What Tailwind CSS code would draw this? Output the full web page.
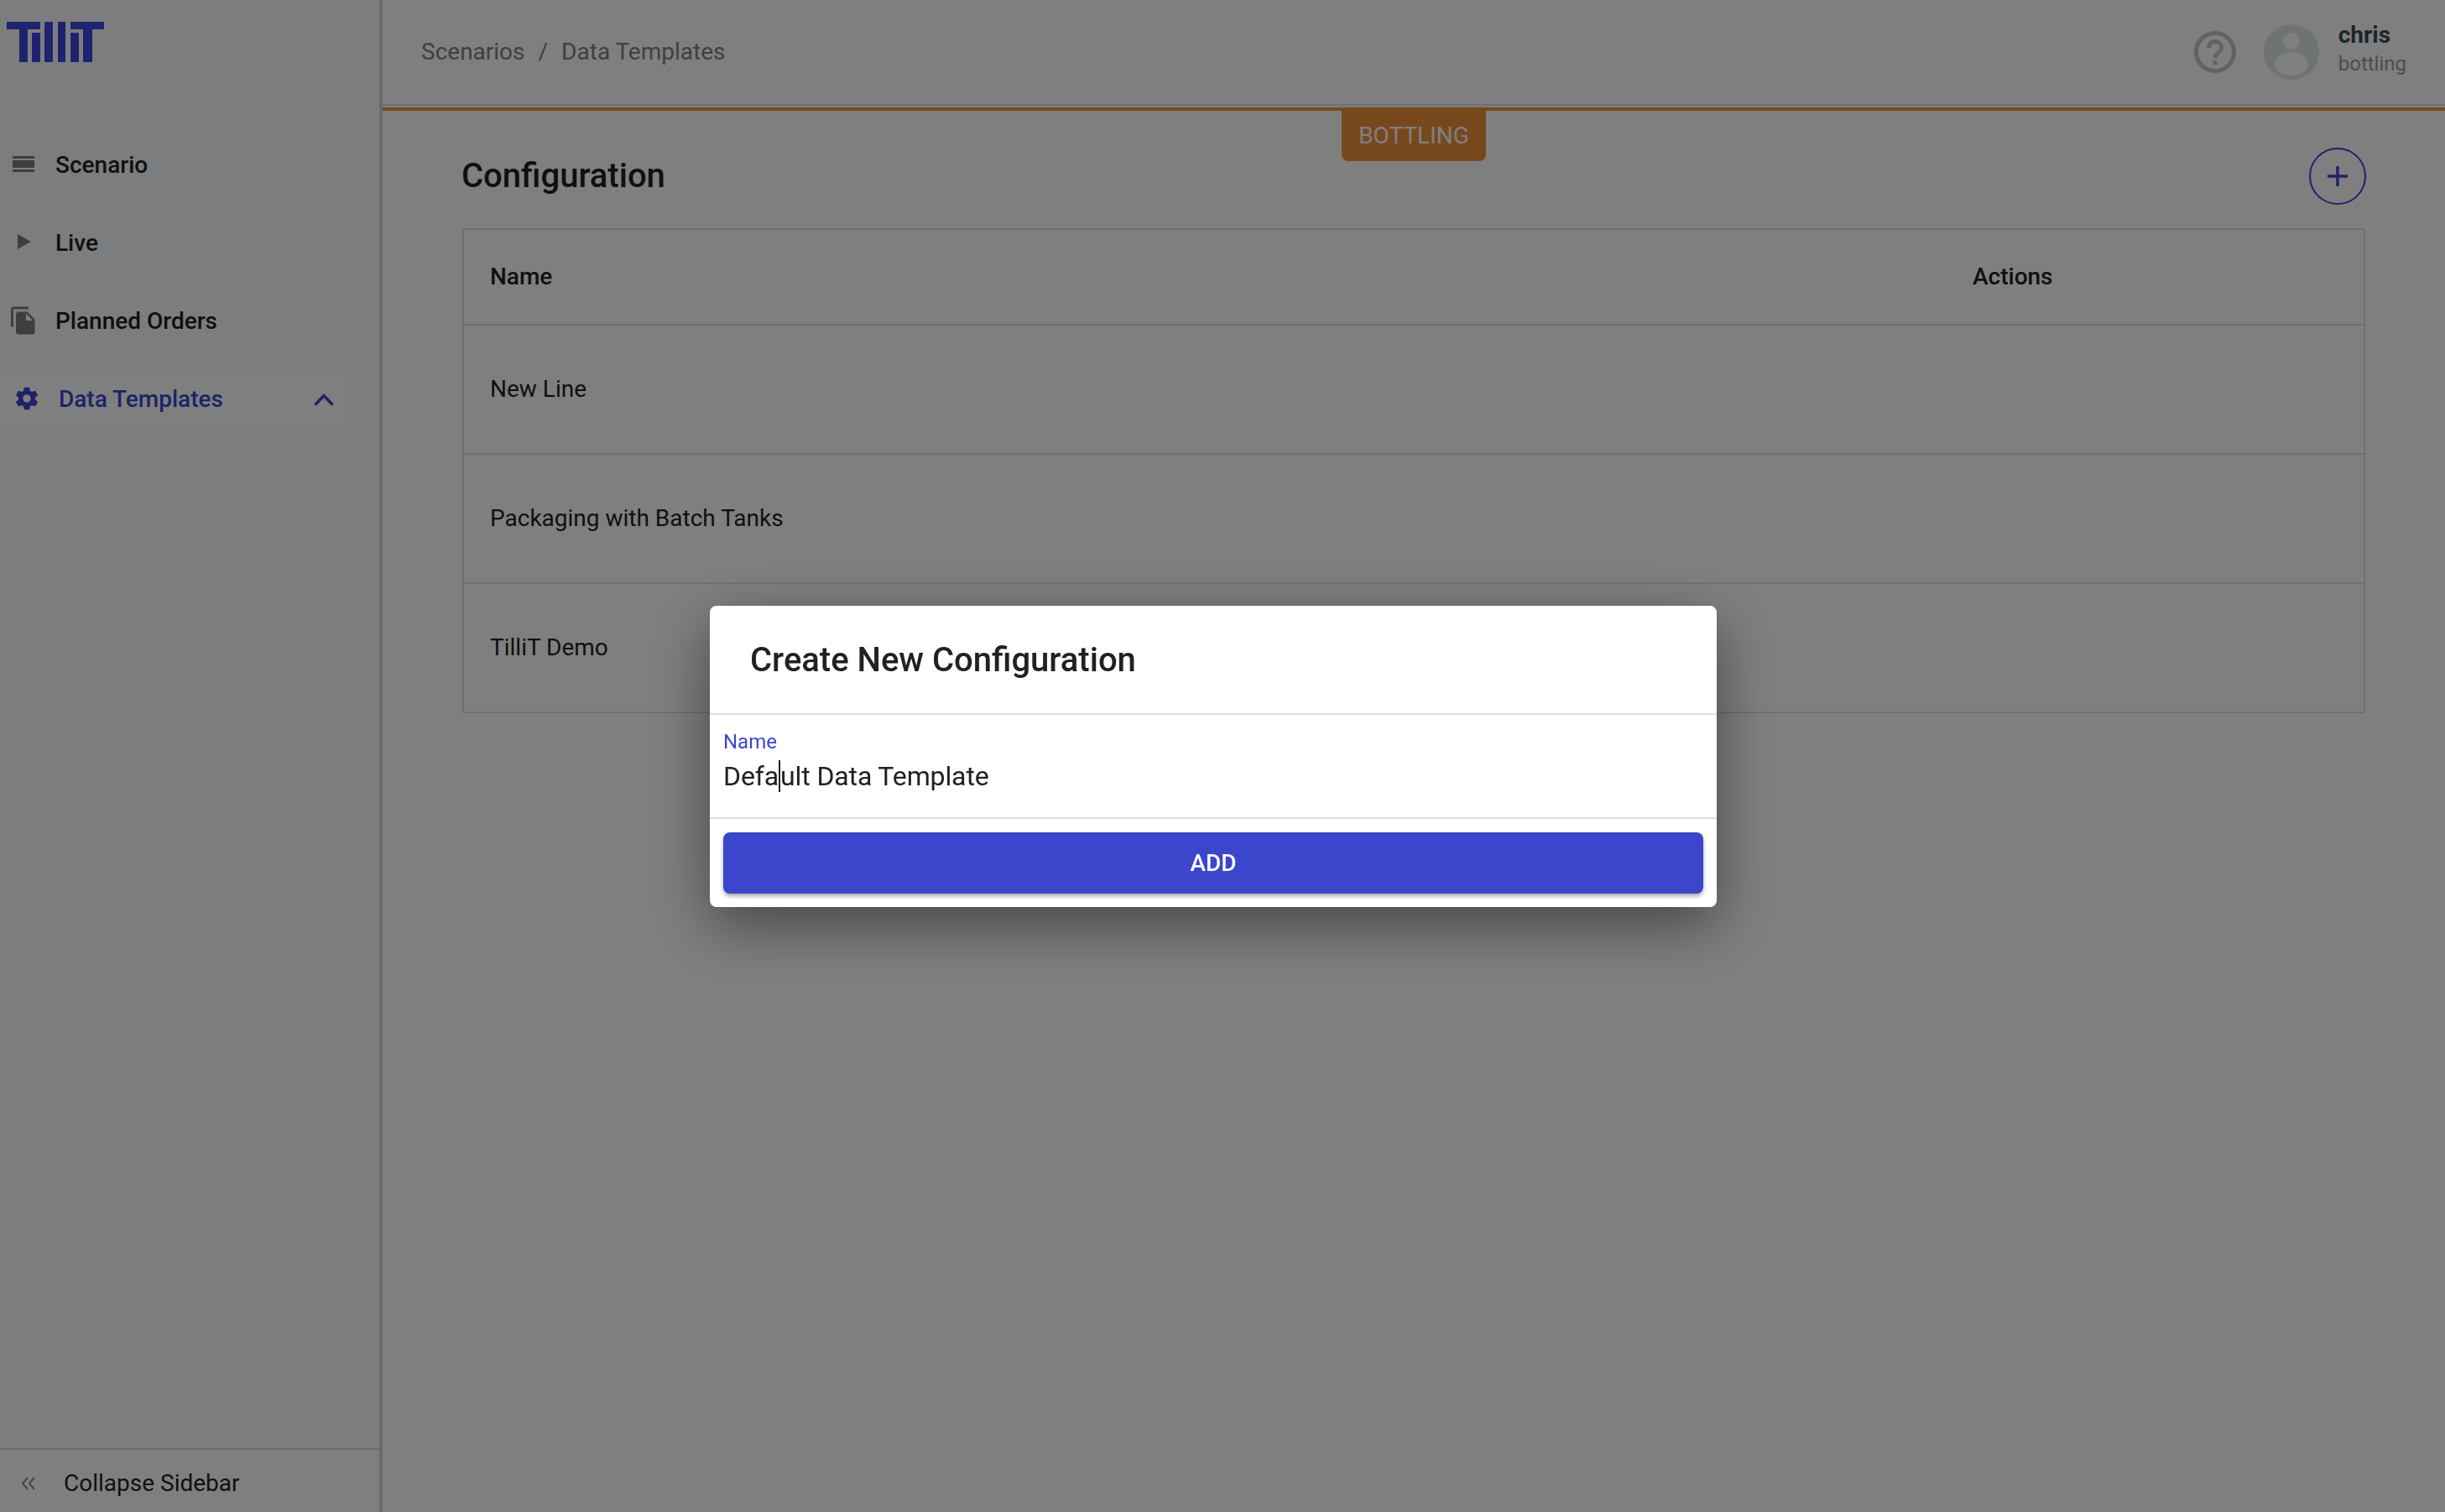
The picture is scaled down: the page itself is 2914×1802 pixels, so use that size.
<!DOCTYPE html>
<html lang="en">
<head>
    <meta charset="UTF-8">
    <title>Data Templates</title>
    <script src="https://cdn.jsdelivr.net/npm/@tailwindcss/browser@4"></script>
</head>
<body class="font-['Roboto',sans-serif]">
    <div class="flex h-[1802px] w-[2914px] overflow-hidden bg-white text-[#212121]">

        <!-- Sidebar -->
        <aside class="flex w-[456px] shrink-0 flex-col border-r-4 border-r-[#d6d7d9] bg-[#f8fafc]">
            <div class="h-[150px] pl-2 pt-[26px]">
                <svg class="block" width="116" height="48" viewBox="0 0 116 48" fill="#3c46e0">
                    <rect x="0" y="0" width="40" height="9"/>
                    <rect x="15" y="9" width="10" height="39"/>
                    <rect x="30" y="13" width="10" height="35"/>
                    <rect x="45" y="0" width="10" height="48"/>
                    <rect x="61" y="0" width="9" height="48"/>
                    <rect x="76" y="13" width="10" height="35"/>
                    <rect x="76" y="0" width="40" height="9"/>
                    <rect x="91" y="9" width="11" height="39"/>
                </svg>
            </div>
            <nav class="flex flex-1 flex-col text-[28px] font-medium leading-none">
                <div class="flex h-[93px] items-center">
                    <div class="flex w-[66px] justify-center pr-[10px]">
                        <svg class="-mt-[2px]" width="26" height="19" viewBox="0 0 26 19" fill="#7d7d7d"><rect width="26" height="3"/><rect y="5" width="26" height="9"/><rect y="16" width="26" height="3"/></svg>
                    </div>
                    <span>Scenario</span>
                </div>
                <div class="flex h-[93px] items-center">
                    <div class="flex w-[66px] justify-center pr-[8px]">
                        <svg class="-mt-[3px]" width="16" height="18" viewBox="0 0 16 18" fill="#7d7d7d"><path d="M0 0l16 9-16 9z"/></svg>
                    </div>
                    <span>Live</span>
                </div>
                <div class="flex h-[93px] items-center">
                    <div class="flex w-[66px] pl-[10px]">
                        <svg class="-mt-[2px]" width="36" height="36" viewBox="0 0 24 24" fill="#7d7d7d"><path d="M16 1H4c-1.1 0-2 .9-2 2v14h2V3h12V1zm-1 4l6 6v10c0 1.1-.9 2-2 2H7.99C6.89 23 6 22.1 6 21l.01-14c0-1.1.89-2 1.99-2h7zm-1 7h5.5L14 6.5V12z"/></svg>
                    </div>
                    <span>Planned Orders</span>
                </div>
                <div class="mt-[17px] flex h-[60px] w-[418px] items-center rounded-r-lg bg-white text-[#3c46cd]">
                    <div class="flex w-[70px] pl-[16px]">
                        <svg class="-mt-[3px]" width="32" height="32" viewBox="0 0 24 24" fill="#3c46cd"><path d="M19.43 12.98c.04-.32.07-.64.07-.98s-.03-.66-.07-.98l2.11-1.65c.19-.15.24-.42.12-.64l-2-3.46c-.12-.22-.39-.3-.61-.22l-2.49 1c-.52-.4-1.08-.73-1.69-.98l-.38-2.65C14.46 2.18 14.25 2 14 2h-4c-.25 0-.46.18-.49.42l-.38 2.65c-.61.25-1.17.59-1.69.98l-2.49-1c-.23-.09-.49 0-.61.22l-2 3.46c-.13.22-.07.49.12.64l2.11 1.65c-.04.32-.07.65-.07.98s.03.66.07.98l-2.11 1.65c-.19.15-.24.42-.12.64l2 3.46c.12.22.39.3.61.22l2.49-1c.52.4 1.08.73 1.69.98l.38 2.65c.03.24.24.42.49.42h4c.25 0 .46-.18.49-.42l.38-2.65c.61-.25 1.17-.59 1.69-.98l2.49 1c.23.09.49 0 .61-.22l2-3.46c.12-.22.07-.49-.12-.64l-2.11-1.65zM12 15.5c-1.93 0-3.5-1.57-3.5-3.5s1.57-3.5 3.5-3.5 3.5 1.57 3.5 3.5-1.57 3.5-3.5 3.5z"/></svg>
                    </div>
                    <span class="flex-1">Data Templates</span>
                    <svg class="mr-[20px]" width="24" height="16" viewBox="0 0 24 16" fill="none" stroke="#3c46cd" stroke-width="3.6"><path d="M1.5 14.5L12 3.5l10.5 11"/></svg>
                </div>
            </nav>
            <div class="flex h-[76px] items-center border-t-2 border-t-[#d6d7d9] bg-white pt-[6px] text-[28px] leading-none">
                <svg class="ml-[25px] mr-[33px]" width="18" height="16" viewBox="0 0 18 16" fill="none" stroke="#8a8a8a" stroke-width="2"><path d="M8 1L2 8l6 7M16 1l-6 7 6 7"/></svg>
                <span>Collapse Sidebar</span>
            </div>
        </aside>

        <!-- Main -->
        <div class="flex min-w-0 flex-1 flex-col">
            <header class="flex h-[132px] shrink-0 items-start border-b-4 border-b-[#f4943a] pt-0">
                <div class="flex h-[126px] w-full items-center border-b-2 border-b-[#e0e0e0] pl-[46px] pr-[46px] text-[28px] text-[#808080]">
                    <span>Scenarios</span>
                    <span class="mx-[16px]">/</span>
                    <span>Data Templates</span>
                    <div class="ml-auto flex items-center">
                        <svg width="60" height="60" viewBox="0 0 24 24" fill="#c4c4c4"><path d="M11 18h2v-2h-2v2zm1-16C6.48 2 2 6.48 2 12s4.48 10 10 10 10-4.48 10-10S17.52 2 12 2zm0 18c-4.41 0-8-3.59-8-8s3.59-8 8-8 8 3.59 8 8-3.59 8-8 8zm0-14c-2.21 0-4 1.79-4 4h2c0-1.1.9-2 2-2s2 .9 2 2c0 2-3 1.75-3 5h2c0-2.25 3-2.5 3-5 0-2.21-1.79-4-4-4z"/></svg>
                        <svg class="ml-[28px]" width="66" height="66" viewBox="0 0 66 66"><circle cx="33" cy="33" r="33" fill="#e0e7e9"/><circle cx="33" cy="20" r="10" fill="#ffffff"/><ellipse cx="33" cy="47" rx="20" ry="14" fill="#ffffff"/></svg>
                        <div class="ml-[23px] flex flex-col pb-[4px]">
                            <span class="text-[28px] font-bold leading-[32px] text-[#3a4a55]">chris</span>
                            <span class="text-[24px] leading-[36px] text-[#8e9ca6]">bottling</span>
                        </div>
                    </div>
                </div>
            </header>

            <main class="relative flex-1 px-[95px]">
                <div class="absolute left-[1143px] top-[-4px] flex h-[64px] w-[172px] items-center justify-center rounded-b-lg bg-[#f0913a] pt-[3px] text-[28px] text-white">BOTTLING</div>
                <div class="flex h-[140px] items-center justify-between pt-[15px]">
                    <h1 class="-ml-px text-[40px] font-medium text-[#212121]">Configuration</h1>
                    <div class="-mr-px flex h-[68px] w-[68px] items-center justify-center rounded-full border-2 border-[#3c46cd]">
                        <svg width="26" height="26" viewBox="0 0 26 26" stroke="#3c46cd" stroke-width="3.4"><path d="M13 1v24M1 13h24"/></svg>
                    </div>
                </div>
                <div class="border-2 border-[#e0e0e0] text-[28px]">
                    <div class="flex h-[114px] items-center border-b-2 border-[#e0e0e0] pl-[31px] font-medium">
                        <span class="w-[1767px]">Name</span>
                        <span>Actions</span>
                    </div>
                    <div class="flex h-[154px] items-center border-b-2 border-[#e0e0e0] pl-[31px]">New Line</div>
                    <div class="flex h-[154px] items-center border-b-2 border-[#e0e0e0] pl-[31px]">Packaging with Batch Tanks</div>
                    <div class="flex h-[152px] items-center pl-[31px]">TilliT Demo</div>
                </div>
            </main>
        </div>
    </div>

    <!-- Dialog -->
    <div class="fixed inset-0 bg-black/50 pl-[846px] pt-[722px]">
        <div class="flex h-[359px] w-[1200px] flex-col rounded-lg bg-white shadow-[0_22px_70px_rgba(0,0,0,0.45)]">
            <div class="flex h-[130px] shrink-0 items-center border-b-2 border-[#e0e0e0] pl-[48px] pt-[2px] text-[40px] font-medium text-[#212121]">Create New Configuration</div>
            <div class="h-[124px] shrink-0 border-b-2 border-[#e0e0e0] pl-[16px] pt-[16px]">
                <div class="text-[24px] leading-[32px] text-[#3c46cd]">Name</div>
                <div class="mt-[3px] text-[32px] leading-[44px] tracking-[-0.12px] text-[#212121]">Defa<span class="inline-block h-[38px] w-0 border-l-2 border-[#212121] align-[-8px]"></span>ult Data Template</div>
            </div>
            <div class="px-[16px] pt-[16px]">
                <div class="flex h-[73px] items-center justify-center rounded-lg bg-[#3c46cd] text-[28px] font-medium text-white shadow-[0_3px_5px_rgba(0,0,0,0.35)]">ADD</div>
            </div>
        </div>
    </div>
</body>
</html>
